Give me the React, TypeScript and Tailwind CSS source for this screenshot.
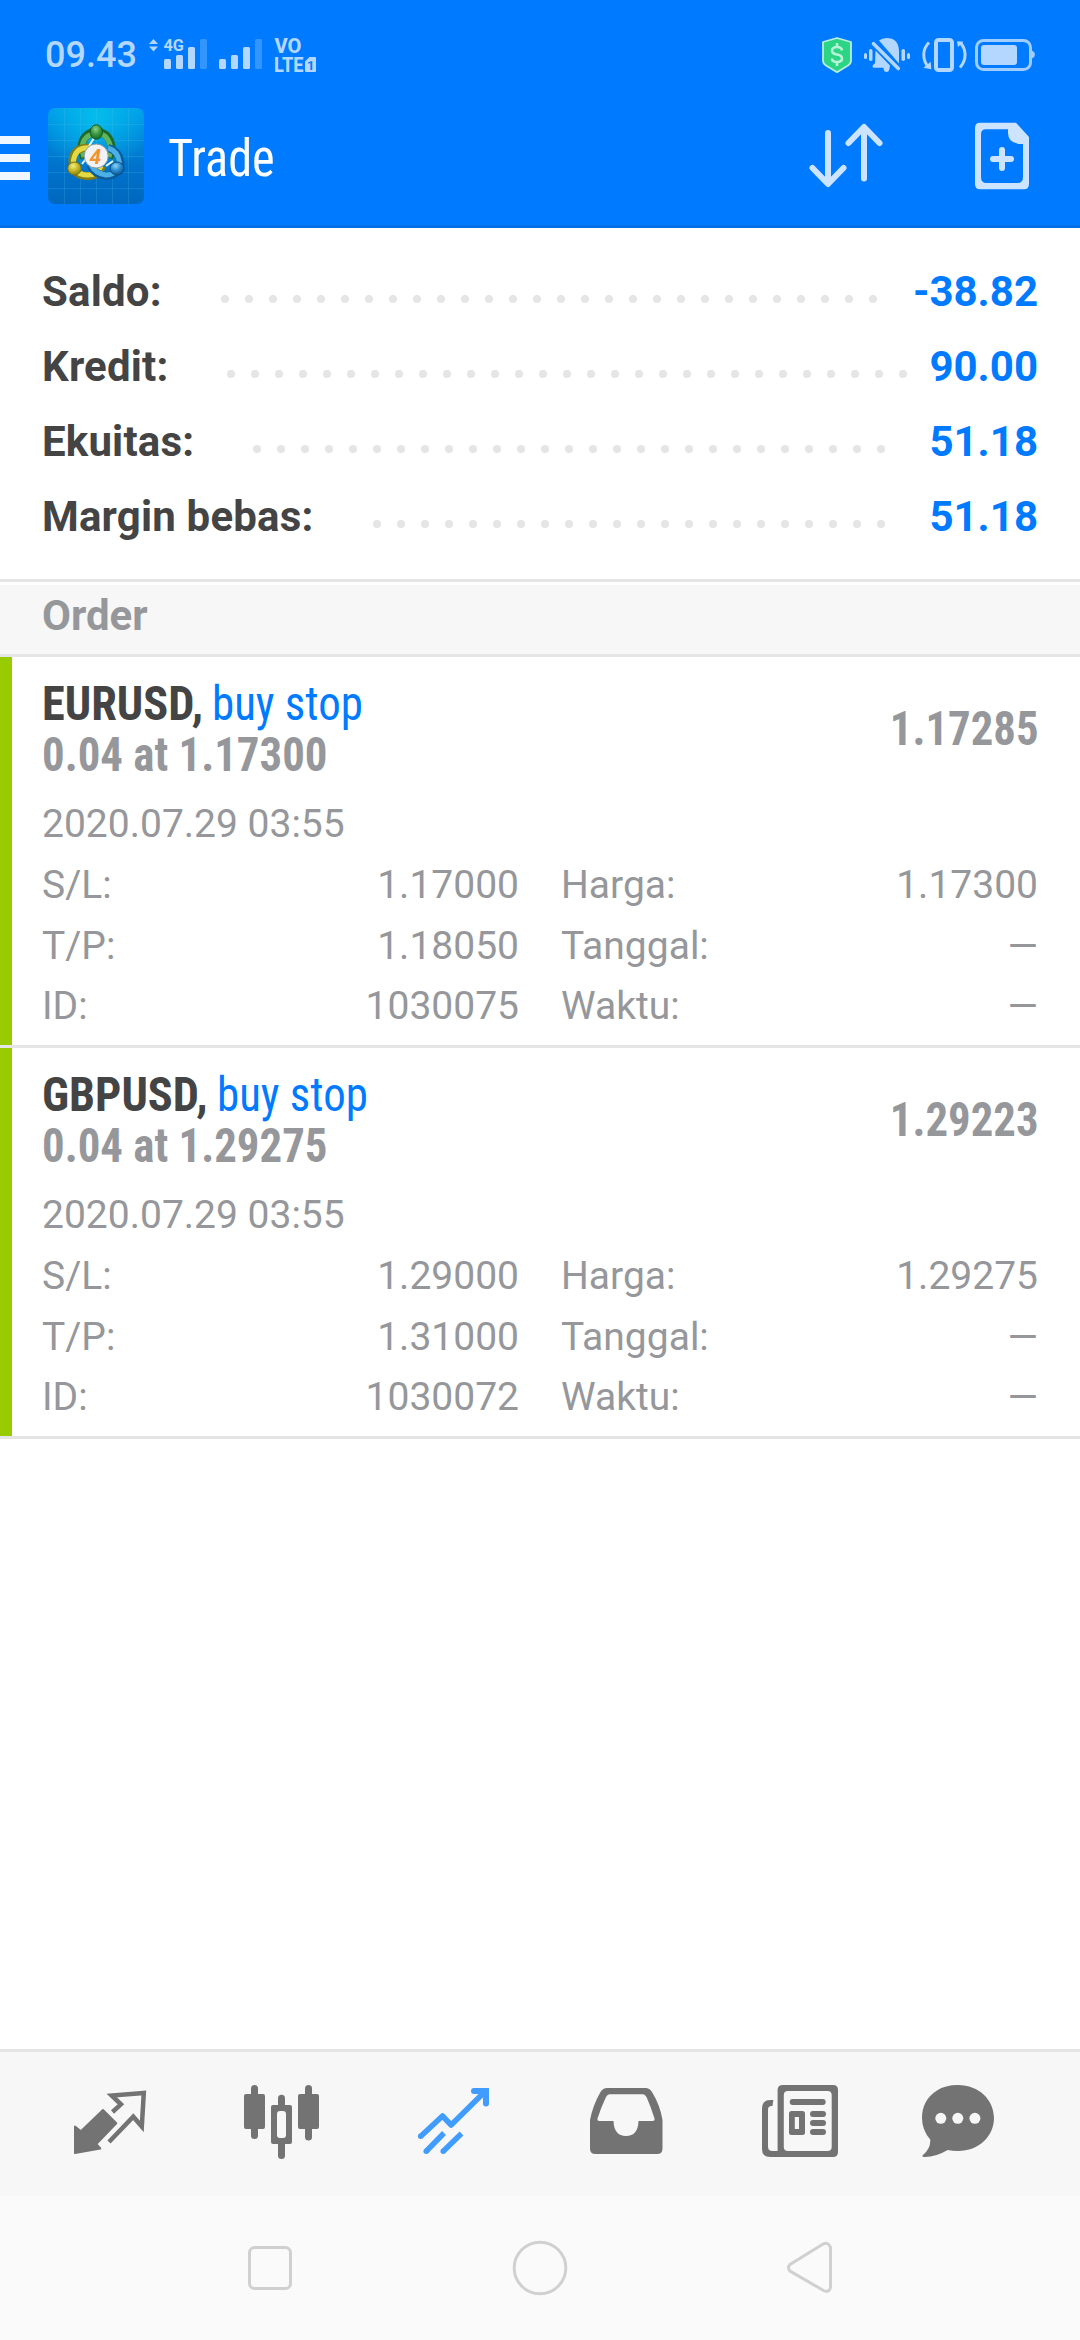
import type { ReactNode } from "react";

const summary = [
  { label: "Saldo:", value: "-38.82", dots: 28 },
  { label: "Kredit:", value: "90.00", dots: 29 },
  { label: "Ekuitas:", value: "51.18", dots: 27 },
  { label: "Margin bebas:", value: "51.18", dots: 22 },
];

const orders = [
  {
    symbol: "EURUSD,",
    type: "buy stop",
    volume: "0.04 at 1.17300",
    price: "1.17285",
    date: "2020.07.29 03:55",
    details: [
      ["S/L:", "1.17000"],
      ["Harga:", "1.17300"],
      ["T/P:", "1.18050"],
      ["Tanggal:", "—"],
      ["ID:", "1030075"],
      ["Waktu:", "—"],
    ],
  },
  {
    symbol: "GBPUSD,",
    type: "buy stop",
    volume: "0.04 at 1.29275",
    price: "1.29223",
    date: "2020.07.29 03:55",
    details: [
      ["S/L:", "1.29000"],
      ["Harga:", "1.29275"],
      ["T/P:", "1.31000"],
      ["Tanggal:", "—"],
      ["ID:", "1030072"],
      ["Waktu:", "—"],
    ],
  },
];

function SignalIcons() {
  return (
    <svg width="176" height="38" viewBox="144 36 176 38" fill="#b3d7ff" className="overflow-visible font-['Roboto',sans-serif]">
      <path d="M149 44l4.500-5 4.500 5zM149 46.500h9l-4.500 5z" />
      <text x="163.500" y="51" fontSize="16.500" fontWeight="700" textLength="20.500" lengthAdjust="spacingAndGlyphs">4G</text>
      <rect x="164" y="59" width="7" height="10" rx="1.500" />
      <rect x="176" y="55" width="7" height="14" rx="1.500" />
      <rect x="188" y="47" width="7" height="22" rx="1.500" />
      <rect x="200" y="39" width="7" height="30" rx="1.500" fill="#3395ff" />
      <rect x="219" y="59" width="7" height="10" rx="1.500" />
      <rect x="231" y="55" width="7" height="14" rx="1.500" />
      <rect x="243" y="47" width="7" height="22" rx="1.500" />
      <rect x="255" y="39" width="7" height="30" rx="1.500" fill="#3395ff" />
      <text x="274.500" y="53" fontSize="20.500" fontWeight="800" textLength="27" lengthAdjust="spacingAndGlyphs">VO</text>
      <text x="274" y="72" fontSize="21" fontWeight="800" textLength="29.500" lengthAdjust="spacingAndGlyphs">LTE</text>
      <path d="M309.500 57H315q1 0 1 1v13q0 1-1 1h-9q-1 0-1-1v-9.500z" />
      <text x="307" y="69.500" fontSize="13" fontWeight="700" fill="#007aff">1</text>
    </svg>
  );
}

function ShieldIcon() {
  return (
    <svg width="32" height="38" viewBox="821 35 32 38">
      <path d="M837 37l14 4v18.500q0 3-3 5L837 71.200l-11-6.700q-3-2-3-5V41z" fill="#2bd583" stroke="#b8eedd" strokeWidth="1.800" strokeLinejoin="round" />
      <path d="M842 49.500q-.5-3.500-5-3.500t-5 3.500q0 3.300 5 4t5 4q0 3.500-5 3.500t-5-3.500M837 42v4M837 61v4" fill="none" stroke="#b8f3d8" strokeWidth="2.600" />
    </svg>
  );
}

function BellOffIcon() {
  return (
    <svg width="46" height="38" viewBox="864 35 46 38" fill="#b3d7ff">
      <path d="M879 39.500Q882 37 886.500 37q12 0 12.500 13v12.500z" />
      <path d="M875.500 49.500L890 64.500l-.5 3q-.5 3.500-3 3.500t-3-3.500v-.7H873.500q-1.500-.5-.7-2.500l2.200-2z" />
      <path d="M873.500 42.700L898.300 67.500" stroke="#b3d7ff" strokeWidth="3.600" strokeLinecap="round" />
      <rect x="864" y="52" width="3" height="6" rx="1.500" />
      <rect x="869" y="48" width="3.500" height="12" rx="1.700" />
      <rect x="901.500" y="48" width="3.500" height="12" rx="1.700" />
      <rect x="907" y="52" width="3" height="6" rx="1.500" />
    </svg>
  );
}

function VibrateIcon() {
  return (
    <svg width="46" height="38" viewBox="921 35 46 38" fill="none" stroke="#b3d7ff">
      <rect x="936" y="39" width="16" height="30" rx="2.500" strokeWidth="4" />
      <path d="M929 41.500Q923.500 47 923.800 54.500 924 61 928 65.500M960 66.500Q965.500 60.500 965 52.500 964.500 46.500 961 42.500" strokeWidth="3" />
      <path d="M923.500 66.800l7.800 1.400-.6-7.500zM957 40.200l6.500.6-5.500 5.200z" fill="#b3d7ff" stroke="none" />
    </svg>
  );
}

function BatteryIcon() {
  return (
    <svg width="62" height="38" viewBox="974 35 62 38">
      <rect x="976.500" y="39.500" width="54" height="29" rx="7" fill="none" stroke="#a0cdff" strokeWidth="3" />
      <rect x="981" y="44" width="36" height="20" rx="3" fill="#b3d7ff" />
      <path d="M1032 49.500q3 1.500 3 4t-3 4z" fill="#a0cdff" />
    </svg>
  );
}

function StatusBar() {
  return (
    <div className="flex h-[84px] items-center pt-[26px] pr-11 pl-[45px]">
      <span className="w-[99px] text-[36px] font-medium text-[#b3d7ff]">09.43</span>
      <SignalIcons />
      <div className="ml-auto flex items-center">
        <ShieldIcon />
        <div className="ml-[11px]"><BellOffIcon /></div>
        <div className="ml-[11px]"><VibrateIcon /></div>
        <div className="ml-[7px]"><BatteryIcon /></div>
      </div>
    </div>
  );
}

function AppLogo() {
  return (
    <svg width="96" height="96" viewBox="0 0 96 96" className="ml-[18px]">
      <defs>
        <linearGradient id="base" x1="0" y1="0" x2="0" y2="1">
          <stop offset="0" stopColor="#009be8" />
          <stop offset="0.600" stopColor="#0073cc" />
          <stop offset="1" stopColor="#0068bd" />
        </linearGradient>
        <radialGradient id="glow" cx="0.500" cy="0.080" r="0.600">
          <stop offset="0" stopColor="#04bdec" />
          <stop offset="1" stopColor="#04bdec" stopOpacity="0" />
        </radialGradient>
        <radialGradient id="greenHead" cx="0.450" cy="0.300" r="0.700">
          <stop offset="0" stopColor="#8fd08a" />
          <stop offset="0.500" stopColor="#3c9a42" />
          <stop offset="1" stopColor="#186b28" />
        </radialGradient>
        <radialGradient id="yellowHead" cx="0.400" cy="0.300" r="0.700">
          <stop offset="0" stopColor="#f3ec87" />
          <stop offset="0.500" stopColor="#c6bc2a" />
          <stop offset="1" stopColor="#8b8413" />
        </radialGradient>
        <radialGradient id="blueHead" cx="0.400" cy="0.300" r="0.700">
          <stop offset="0" stopColor="#8fd2f5" />
          <stop offset="0.500" stopColor="#2a8fcf" />
          <stop offset="1" stopColor="#0c5795" />
        </radialGradient>
      </defs>
      <rect width="96" height="96" rx="7" fill="url(#base)" />
      <rect width="96" height="96" rx="7" fill="url(#glow)" />
      <path d="M16.500 0v96M32.500 0v96M48.500 0v96M64.500 0v96M80.500 0v96M0 16.500h96M0 32.500h96M0 48.500h96M0 64.500h96M0 80.500h96" stroke="#5cc4f0" strokeOpacity="0.200" />
      <g fill="none">
        <path d="M36 50Q30 35 39 27 48 20 58 27 67 36 61 50" stroke="#1c6a2c" strokeWidth="8" />
        <path d="M36 49Q31 35 40 28 48 22 57 28 65 36 61 49" stroke="#5fb55c" strokeWidth="5" />
        <path d="M43 40Q26 38 24.500 52 24 67 38 68 50 69 54 58" stroke="#857c12" strokeWidth="8" />
        <path d="M43 40Q28 38 25.500 52 25 66 38 67 49 68 53 58" stroke="#e3d944" strokeWidth="5" />
        <path d="M60 40Q71 43 72.500 55 70 68 58 68 47 67 42 57" stroke="#0c5c9d" strokeWidth="8" />
        <path d="M60 40Q70 43 71.500 55 69 67 58 67 48 66 43 57" stroke="#4bb0e6" strokeWidth="5" />
        <path d="M46 30l-5 8M40 48l-6 8M58 58l7-5" stroke="#e9f6ec" strokeWidth="2" />
      </g>
      <ellipse cx="48.300" cy="24" rx="6.200" ry="7.200" fill="url(#greenHead)" stroke="#145a22" />
      <ellipse cx="26.500" cy="60.500" rx="6.800" ry="6.500" fill="url(#yellowHead)" stroke="#79710f" />
      <ellipse cx="69" cy="60.500" rx="7" ry="6.500" fill="url(#blueHead)" stroke="#0a4c86" />
      <circle cx="48.200" cy="48" r="12" fill="#f2f2f4" stroke="#8c9aa6" />
      <text x="41.500" y="55.500" fontSize="21" fontWeight="700" fontStyle="italic" fill="#f39330" className="font-['Roboto',sans-serif]">4</text>
    </svg>
  );
}

function Header() {
  return (
    <header className="flex h-36 items-center border-b-3 border-[#006fe6] pt-[3px] pr-[30px]">
      <div className="flex w-[30px] flex-col gap-2.5 pt-1">
        <div className="h-2 bg-[#f0f7ff]" />
        <div className="h-2 bg-[#f0f7ff]" />
        <div className="h-2 bg-[#f0f7ff]" />
      </div>
      <AppLogo />
      <h1 className="ml-6 origin-left scale-x-[0.945] pt-[6px] text-[51px] font-[450] font-stretch-condensed text-white">Trade</h1>
      <svg width="96" height="96" viewBox="800 108 96 96" className="ml-auto" fill="none" stroke="#cce4ff" strokeWidth="6" strokeLinecap="round" strokeLinejoin="round">
        <path d="M828 133v50.500M812.500 168l15.500 16 15.500-16M864 178.500V127.500M848.500 143l15.500-16 15.500 16" />
      </svg>
      <svg width="96" height="96" viewBox="954 108 96 96" className="ml-[58px]">
        <path fillRule="evenodd" d="M980 122.700h36L1029 137v47q0 5.300-5 5.300h-44q-5 0-5-5.300v-56q0-5.300 5-5.300zM1008 129.300h-22q-5 0-5 5V177q0 6 5.500 6h31q5.500 0 5.500-6v-33h-4Q1008 142.500 1008 133z" fill="#cce4ff" />
        <path d="M993 159h18M1002 150v18" stroke="#cce4ff" strokeWidth="6" strokeLinecap="round" />
      </svg>
    </header>
  );
}

function SummaryRow({ label, value, dots }: { label: string; value: string; dots: number }) {
  return (
    <div className="flex h-[75px] items-center text-[42px] leading-[75px] font-bold">
      <span className="tracking-[0.18px] text-[#444444]">{label}</span>
      <div className="ml-[59px] flex gap-4 pt-[15px]">
        {Array.from({ length: dots }, (_, i) => (
          <span key={i} className="size-2 rounded-full bg-[#e5e5e5]" />
        ))}
      </div>
      <span className="ml-auto text-[#007aff]">{value}</span>
    </div>
  );
}

function OrderItem({ order }: { order: (typeof orders)[number] }) {
  return (
    <article className="flex h-[391px] border-b-3 border-[#e5e5e5]">
      <div className="w-3 bg-[#99cc00]" />
      <div className="flex-1 pt-[21px] pr-[42px] pl-[30px] text-[#96979b]">
        <div className="flex items-center justify-between text-[48px] leading-[51px] font-bold font-stretch-condensed">
          <div>
            <p className="flex gap-[3px]">
              <span className="origin-left scale-x-[0.965] text-[#444444]">{order.symbol}</span>
              <span className="origin-left scale-x-[0.935] font-[430] text-[#007aff]">{order.type}</span>
            </p>
            <p className="origin-left scale-x-[0.934]">{order.volume}</p>
          </div>
          <p className="origin-right scale-x-[0.932] pb-0.5">{order.price}</p>
        </div>
        <p className="mt-3.5 text-[39px] leading-[61px]">{order.date}</p>
        <div className="grid grid-cols-2 gap-x-[42px] text-[39px] leading-[60.6px]">
          {order.details.map(([label, value]) => (
            <div key={label} className="flex justify-between">
              <span>{label}</span>
              <span>{value}</span>
            </div>
          ))}
        </div>
      </div>
    </article>
  );
}

function TabIcon({ children }: { children: ReactNode }) {
  return (
    <div className="flex flex-1 justify-center">
      <svg width="96" height="96" viewBox="0 0 96 96" fill="#737373">
        {children}
      </svg>
    </div>
  );
}

function TabBar() {
  return (
    <nav className="flex h-[147px] items-center border-t-3 border-[#e5e5e5] bg-[#f7f7f7] px-6">
      <TabIcon>
        <path d="M13 50.500l5.900 4.700L41 34l13.300 13.200-20 20.800 4 4.500L13 77z" stroke="#737373" strokeWidth="2" strokeLinejoin="round" />
        <path d="M50.500 36l8.400-7.700-9.200-8.800L81.800 17 79.800 50.500 71.300 40.700 47 66" fill="none" stroke="#737373" strokeWidth="4.500" />
      </TabIcon>
      <TabIcon>
        <rect x="17" y="9" width="7" height="54" rx="3.500" />
        <rect x="10" y="18" width="21" height="35" rx="2" />
        <rect x="44" y="18.700" width="7" height="64.300" rx="3.500" />
        <rect x="37" y="29" width="21" height="39" rx="2" />
        <rect x="43" y="35" width="9" height="27" rx="3" fill="#f7f7f7" />
        <rect x="71" y="9" width="7" height="55.500" rx="3.500" />
        <rect x="64" y="18" width="21" height="35" rx="2" />
      </TabIcon>
      <TabIcon>
        <g fill="none" stroke="#409cff" strokeWidth="5.500">
          <path d="M14.500 60.500l22-20.500 8.600 9L79 15.500" strokeLinejoin="round" />
          <path d="M68 15h12v12.500" strokeWidth="6" strokeLinecap="round" />
          <path d="M20 75.500l18-18.500M37 75.500l18.500-18" />
        </g>
        <g fill="#409cff">
          <path d="M74 12h8q1 0 1 1v9z" />
          <circle cx="14.700" cy="60.300" r="2.750" />
          <circle cx="20.200" cy="75.300" r="2.750" />
          <circle cx="37.200" cy="75.300" r="2.750" />
        </g>
      </TabIcon>
      <TabIcon>
        <path fillRule="evenodd" d="M29 12h38.500q4 0 6.500 4 8 13 10.500 28v28.500q0 5.500-5.500 5.500H17.500Q12 78 12 72.500V44Q15 29 22.500 16q2.500-4 6.500-4zM31.500 18.300q-2 0-3.500 2.700-5 10.500-8.500 21.500-.5 2.500 2 2.500h14q.5 15 12.500 15t12.500-15h14q2.500 0 2-2.500Q73 31 68.500 21q-1.500-2.700-3.500-2.700z" />
      </TabIcon>
      <TabIcon>
        <path fillRule="evenodd" d="M33 9h50q5 0 5 5v62q0 5-5 5H27.600V14q0-5 5.400-5zM38 15q-4.200 0-4.200 4v52q0 4 4.200 4h39.500q4.200 0 4.200-4V19q0-4-4.200-4z" />
        <path d="M23.300 24l-.8 6h-1q-3.500 0-3.500 3.500v37q0 4.500 4.500 4.500H28v6h-8q-8 0-8-8V32.500q0-8.500 8-8.500z" />
        <rect x="39.700" y="23" width="36" height="6" rx="3" />
        <path fillRule="evenodd" d="M41.500 35h11q2.500 0 2.500 2.500v19q0 2.500-2.500 2.500h-11Q39 59 39 56.500v-19q0-2.500 2.500-2.500zM44.800 41v12H49V41z" />
        <rect x="60" y="35" width="16" height="6" rx="3" />
        <rect x="60" y="44" width="16" height="6" rx="3" />
        <rect x="60" y="53" width="16" height="6" rx="3" />
      </TabIcon>
      <TabIcon>
        <path d="M36 9C57 9 72 24 72 42S57 75 36 75q-6 0-10.300-1Q13 81.500 1.500 81q-2-.5-.5-2 8-6.500 7.200-15.500Q0 54 0 42 0 24 15 14.500 23 9 36 9z" />
        <g fill="#f7f7f7">
          <circle cx="18.800" cy="42.300" r="5.500" />
          <circle cx="35.800" cy="42.300" r="5.500" />
          <circle cx="52.900" cy="42.300" r="5.500" />
        </g>
      </TabIcon>
    </nav>
  );
}

function NavigationBar() {
  return (
    <div className="flex h-36 items-center justify-between bg-[#fafafa] px-60">
      <svg width="60" height="60" viewBox="0 0 60 60" fill="none" stroke="#d0d0d0" strokeWidth="3">
        <rect x="9.500" y="9.500" width="41" height="41" rx="5" />
      </svg>
      <svg width="60" height="60" viewBox="0 0 60 60" fill="none" stroke="#d0d0d0" strokeWidth="3">
        <circle cx="30" cy="30" r="25.800" />
      </svg>
      <svg width="60" height="60" viewBox="0 0 60 60" fill="none" stroke="#d0d0d0" strokeWidth="3">
        <path d="M50.500 9.500v40q-1.500 5.500-7 3L10 33q-3-3.500 0-6.500L43.500 5.800q5-2 7 3.700z" />
      </svg>
    </div>
  );
}

export default function App() {
  return (
    <div className="flex h-[2340px] w-[1080px] flex-col bg-white font-['Roboto',sans-serif]">
      <div className="bg-[#007aff]">
        <StatusBar />
        <Header />
      </div>
      <main className="flex-1">
        <section className="border-b-3 border-[#e5e5e5] px-[42px] pt-[26px] pb-[25px]">
          {summary.map((row) => (
            <SummaryRow key={row.label} {...row} />
          ))}
        </section>
        <h2 className="mt-[3px] h-[72px] border-b-3 border-[#e5e5e5] bg-[#f7f7f7] px-[42px] text-[42px] leading-[61px] font-bold text-[#96979b]">Order</h2>
        {orders.map((order) => (
          <OrderItem key={order.symbol} order={order} />
        ))}
      </main>
      <TabBar />
      <NavigationBar />
    </div>
  );
}
